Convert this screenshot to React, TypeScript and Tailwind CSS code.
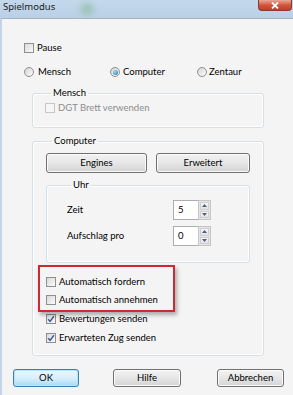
import React from "react";

function Check({ checked = false, disabled = false }: { checked?: boolean; disabled?: boolean }) {
  return (
    <span
      className={
        disabled
          ? "flex h-[10px] w-[10px] shrink-0 items-center justify-center border border-[#c6c6c6] bg-[#f6f6f6]"
          : "flex h-[10px] w-[10px] shrink-0 items-center justify-center border border-[#8f8f8f] bg-gradient-to-br from-[#d9d9d9] to-[#fbfbfb]"
      }
    >
      {checked && (
        <svg width="8" height="8" viewBox="0 0 8 8">
          <path d="M1.2 4.2 L3.1 6.4 L6.9 1.2" fill="none" stroke="#3d5a98" strokeWidth="1.5" />
        </svg>
      )}
    </span>
  );
}

function Radio({ checked = false }: { checked?: boolean }) {
  return (
    <span className="flex h-[10px] w-[10px] shrink-0 items-center justify-center rounded-full border border-[#8f8f8f] bg-gradient-to-br from-[#d4d4d4] to-[#fdfdfd]">
      {checked && (
        <span className="h-[5px] w-[5px] rounded-full bg-[radial-gradient(circle_at_35%_35%,#9fdcfb,#1f6fae)]" />
      )}
    </span>
  );
}

function Btn({ label, cls, primary = false }: { label: string; cls: string; primary?: boolean }) {
  return (
    <div
      className={
        primary
          ? `flex ${cls} items-center justify-center rounded-[3px] border border-[#3c7fb1] bg-gradient-to-b from-[#eaf6fd] via-[#d9f0fc] to-[#a7d9f5] shadow-[inset_0_0_0_1px_#b5e3fb]`
          : `flex ${cls} items-center justify-center rounded-[3px] border border-[#707070] bg-gradient-to-b from-[#f2f2f2] via-[#e6e6e6] to-[#d3d3d3] shadow-[inset_0_0_0_1px_#fbfbfb]`
      }
    >
      <span className="text-[9.5px] leading-[12px] text-black">{label}</span>
    </div>
  );
}

function Arrow({ up }: { up: boolean }) {
  return (
    <svg width="5" height="3" viewBox="0 0 5 3">
      {up ? <path d="M0 3 L2.5 0 L5 3 Z" fill="#4d6185" /> : <path d="M0 0 L2.5 3 L5 0 Z" fill="#4d6185" />}
    </svg>
  );
}

function Spinner({ value }: { value: string }) {
  return (
    <div className="flex h-[20px] w-[38px]">
      <div className="flex w-[25px] items-center border border-[#abadb3] border-r-0 bg-white pl-[4px] text-[9.5px] leading-[12px]">
        {value}
      </div>
      <div className="flex w-[13px] flex-col gap-[1px] border border-[#c4c4c4] bg-[#e6e6e6] p-[1px]">
        <div className="flex flex-1 items-center justify-center border border-[#cfcfcf] bg-gradient-to-b from-[#f6f6f6] to-[#e2e2e2]">
          <Arrow up />
        </div>
        <div className="flex flex-1 items-center justify-center border border-[#cfcfcf] bg-gradient-to-b from-[#f6f6f6] to-[#e2e2e2]">
          <Arrow up={false} />
        </div>
      </div>
    </div>
  );
}

function Row({ children }: { children: React.ReactNode }) {
  return <div className="flex h-[12px] items-center gap-[3px] text-[9.5px] leading-[12px]">{children}</div>;
}

export default function App() {
  return (
    <div className="flex h-[395px] w-[293px] flex-col overflow-hidden bg-[#f4f4f4] font-['Lato',sans-serif] text-black">
      {/* Title bar */}
      <div className="relative flex h-[18px] shrink-0 items-start justify-between bg-gradient-to-b from-[#c4d8ec] to-[#b9d0e6]">
        <span className="pl-[3px] pt-[1px] font-['Noto_Sans',sans-serif] text-[9.5px] leading-[12px] text-[#1a1a1a]">Spielmodus</span>
        <div className="pointer-events-none absolute left-[80px] top-[3px] h-[12px] w-[14px] rounded-full bg-[#7fb38a] opacity-50 blur-[3px]" />
        <div className="mr-[1px] flex h-[11px] w-[34px] items-center justify-center rounded-b-[4px] border border-t-0 border-[#8c3a2f] bg-gradient-to-b from-[#e7a798] via-[#d2563f] to-[#c23d24]">
          <svg width="8" height="7" viewBox="0 0 8 7">
            <path d="M1 0.5 L7 6.5 M7 0.5 L1 6.5" stroke="#ffffff" strokeWidth="1.8" />
          </svg>
        </div>
      </div>

      {/* Body */}
      <div className="flex flex-1 border-l-2 border-t border-l-[#c1d4e8] border-t-[#a9b3bd]">
        <div className="flex flex-1 flex-col">
          {/* Pause */}
          <div className="ml-[22px] mt-[23px]">
            <Row>
              <Check />
              <span>Pause</span>
            </Row>
          </div>

          {/* Radios */}
          <div className="ml-[22px] mt-[12px] flex">
            <div className="w-[86px]">
              <Row>
                <Radio />
                <span className="ml-[1px]">Mensch</span>
              </Row>
            </div>
            <div className="w-[87px]">
              <Row>
                <Radio checked />
                <span>Computer</span>
              </Row>
            </div>
            <div>
              <Row>
                <Radio />
                <span className="-ml-[1px]">Zentaur</span>
              </Row>
            </div>
          </div>

          {/* Mensch group */}
          <fieldset className="ml-[30px] mt-[9px] w-[232px] rounded-[3px] border border-[#d5dfe5] pb-[13px] pl-[12px] shadow-[inset_0_0_0_1px_#ffffff]">
            <legend className="ml-[6px] px-[2px] text-[9.5px] leading-[12px]">Mensch</legend>
            <div className="mt-[3px]">
              <Row>
                <Check disabled />
                <span className="text-[#8d8d8d]">DGT Brett verwenden</span>
              </Row>
            </div>
          </fieldset>

          {/* Computer group */}
          <fieldset className="ml-[30px] mt-[7px] w-[232px] rounded-[3px] border border-[#d5dfe5] pb-[11px] pl-[13px] shadow-[inset_0_0_0_1px_#ffffff]">
            <legend className="ml-[6px] px-[2px] text-[9.5px] leading-[12px]">Computer</legend>
            <div className="mt-[6px] flex gap-[9px]">
              <Btn label="Engines" cls="h-[20px] w-[101px]" />
              <Btn label="Erweitert" cls="h-[20px] w-[94px]" />
            </div>

            {/* Uhr group */}
            <fieldset className="mt-[6px] w-[204px] rounded-[3px] border border-[#d5dfe5] pb-[16px] pl-[20px] shadow-[inset_0_0_0_1px_#ffffff]">
              <legend className="ml-[4px] px-[2px] text-[9.5px] leading-[12px]">Uhr</legend>
              <div className="mt-[9px] flex flex-col gap-[6px]">
                <div className="flex items-center">
                  <span className="w-[106px] text-[9.5px] leading-[12px]">Zeit</span>
                  <Spinner value="5" />
                </div>
                <div className="flex items-center">
                  <span className="w-[106px] text-[9.5px] leading-[12px]">Aufschlag pro</span>
                  <Spinner value="0" />
                </div>
              </div>
            </fieldset>

            <div className="relative mt-[13px] flex flex-col gap-[6px]">
              <div className="pointer-events-none absolute -left-[8px] -top-[11px] h-[47px] w-[137px] border-2 border-[#cc2a31] shadow-[2px_3px_4px_rgba(0,0,0,0.3)]" />
              <Row>
                <Check />
                <span>Automatisch fordern</span>
              </Row>
              <Row>
                <Check />
                <span>Automatisch annehmen</span>
              </Row>
            </div>
            <div className="mt-[7px] flex flex-col gap-[7px]">
              <Row>
                <Check checked />
                <span>Bewertungen senden</span>
              </Row>
              <Row>
                <Check checked />
                <span>Erwarteten Zug senden</span>
              </Row>
            </div>
          </fieldset>

          {/* Buttons */}
          <div className="ml-[11px] mt-[13px] flex">
            <Btn label="OK" cls="h-[18px] w-[66px]" primary />
            <div className="ml-[34px]">
              <Btn label="Hilfe" cls="h-[18px] w-[68px]" />
            </div>
            <div className="ml-[36px]">
              <Btn label="Abbrechen" cls="h-[18px] w-[67px]" />
            </div>
          </div>
        </div>
      </div>
    </div>
  );
}
